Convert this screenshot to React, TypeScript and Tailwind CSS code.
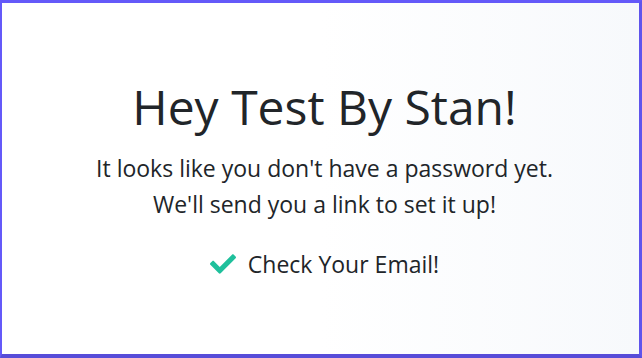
import { FaCheck } from 'react-icons/fa';

export default function App() {
  return (
    <div className="h-[358px] w-[642px] border-t-[3px] border-l-[2px] border-r-[3px] border-b-[4px] border-t-[#6459f9] border-l-[#6459f9] border-r-[#5f54ec] border-b-[#574cd8]">
      <div
        className="h-full w-full flex flex-col items-center pl-[8px] bg-gradient-to-r from-white via-white to-[#f7f9fc] text-[#212529]"
        style={{ fontFamily: '"Open Sans", sans-serif' }}
      >
        <h1 className="mt-[76px] text-[48px] leading-[56px] font-normal">Hey Test By Stan!</h1>
        <p className="mt-[15px] text-[23px] leading-[36px] text-center">
          It looks like you don't have a password yet.
          <br />
          We'll send you a link to set it up!
        </p>
        <div className="mt-[28px] flex items-center gap-[12px] text-[23px] leading-[28px]">
          <FaCheck className="h-[26px] w-[26px] text-[#1fc09c]" />
          <span>Check Your Email!</span>
        </div>
      </div>
    </div>
  );
}
